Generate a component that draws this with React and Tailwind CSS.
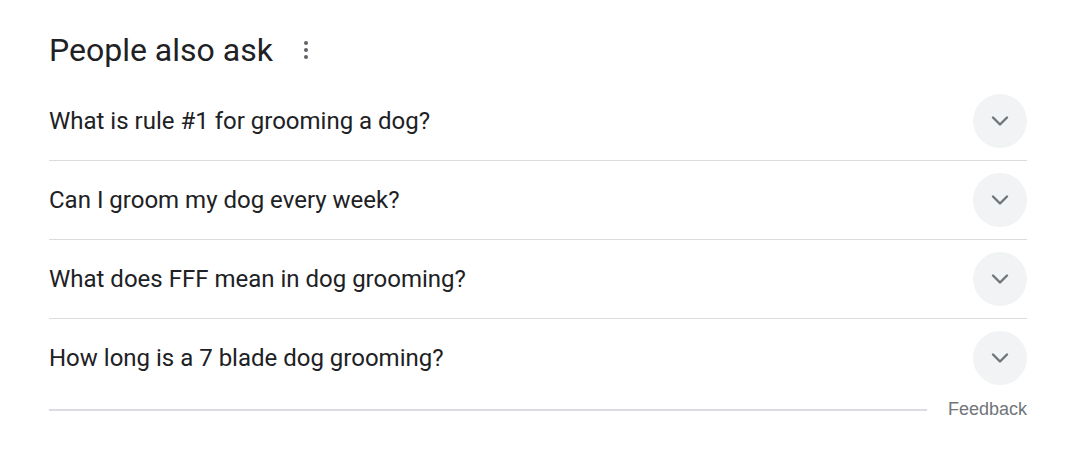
import React from 'react';

const questions = [
  'What is rule #1 for grooming a dog?',
  'Can I groom my dog every week?',
  'What does FFF mean in dog grooming?',
  'How long is a 7 blade dog grooming?',
];

function Chevron() {
  return (
    <svg width="20" height="20" viewBox="0 0 20 20" fill="none">
      <path d="M3 6.5l7 7 7-7" stroke="#70757a" strokeWidth="2.4" strokeLinecap="round" strokeLinejoin="round" />
    </svg>
  );
}

function QuestionRow({ text, last }) {
  return (
    <div className={'flex items-center justify-between py-3 ' + (last ? '' : 'border-b border-[#dadce0]')}>
      <div className="text-[24px] text-[#202124]">{text}</div>
      <button className="flex items-center justify-center w-[54px] h-[54px] rounded-full bg-[#f1f3f4]">
        <Chevron />
      </button>
    </div>
  );
}

export default function App() {
  return (
    <div className="w-[1076px] h-[454px] bg-white px-[49px] pt-[26px]" style={{ fontFamily: 'Roboto, "Liberation Sans", sans-serif' }}>
      <div className="flex items-center h-[48px] mb-[8px]">
        <h2 className="text-[32px] text-[#202124]">People also ask</h2>
        <div className="flex flex-col gap-[3px] ml-[31px]">
          <span className="w-[4px] h-[4px] rounded-full bg-[#5f6368]" />
          <span className="w-[4px] h-[4px] rounded-full bg-[#5f6368]" />
          <span className="w-[4px] h-[4px] rounded-full bg-[#5f6368]" />
        </div>
      </div>
      <div>
        {questions.map((q, i) => (
          <QuestionRow key={q} text={q} last={i === questions.length - 1} />
        ))}
      </div>
      <div className="flex items-center gap-[21px] -mt-[1px]">
        <div className="flex-1 h-[2px] bg-[#dadce0]" />
        <span className="text-[18px] text-[#70757a]" style={{ fontFamily: 'Arial, "Liberation Sans", sans-serif' }}>Feedback</span>
      </div>
    </div>
  );
}
